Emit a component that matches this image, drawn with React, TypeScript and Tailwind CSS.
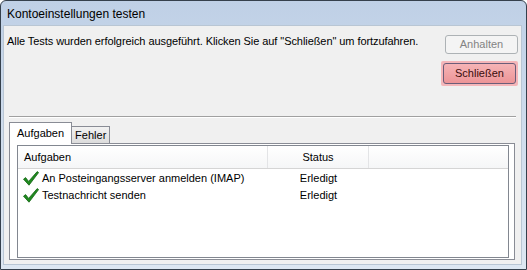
import React from 'react';

// Vista-style "Kontoeinstellungen testen" dialog.

type Task = { label: string; status: string };

const tasks: Task[] = [
  { label: 'An Posteingangsserver anmelden (IMAP)', status: 'Erledigt' },
  { label: 'Testnachricht senden', status: 'Erledigt' },
];

function Check() {
  return (
    <svg width="16" height="15" viewBox="0 0 16 15" className="shrink-0">
      <path
        d="M0.5 8.2 L2.6 6.6 L5.6 10.4 L14.2 0.6 L15.6 1.6 L6 14.2 Z"
        fill="#1f8a1f"
        stroke="#136313"
        strokeWidth="0.8"
        strokeLinejoin="round"
      />
    </svg>
  );
}

export default function App() {
  return (
    <div
      className="relative h-[270px] w-[527px] overflow-hidden bg-white text-black"
      style={{ fontFamily: '"Liberation Sans", Arial, sans-serif' }}
    >
      <div className="flex h-full flex-col rounded-t-[6px] border border-[#35404c] bg-gradient-to-b from-[#bfd0e6] via-[#d0dded] to-[#dde7f2]">
        {/* title bar */}
        <div className="flex h-[24px] shrink-0 items-center pl-[6px] pt-px text-[12px] text-black">
          Kontoeinstellungen testen
        </div>

        {/* client area */}
        <div className="mb-[4px] ml-[2px] mr-[4px] flex flex-1 flex-col border border-[#b9c6d4] bg-[#f0f0f0] text-[11px]">
          <div className="flex justify-between pl-[3px] pr-[3px]">
            <div className="pt-[7px] tracking-[-0.07px]">
              Alle Tests wurden erfolgreich ausgeführt. Klicken Sie auf &quot;Schließen&quot; um fortzufahren.
            </div>
            <div className="flex flex-col items-end gap-[7px] pt-[9px]">
              <div className="flex h-[19px] w-[73px] items-center justify-center rounded-[3px] border border-[#adb2b5] bg-[#f4f4f4] text-[#838383]">
                Anhalten
              </div>
              <div className="rounded-[2px] bg-[#f5b6b9] p-[2px]">
                <div className="flex h-[21px] w-[73px] items-center justify-center rounded-[3px] border border-[#6b5d79] bg-gradient-to-b from-[#f6b4b6] to-[#ec9497] text-[#3a0c0c]">
                  Schließen
                </div>
              </div>
            </div>
          </div>

          {/* etched separator */}
          <div className="ml-[5px] mr-[5px] mt-[30px] h-[2px] border-t border-b border-t-[#a0a0a0] border-b-white" />

          {/* tabs */}
          <div className="ml-[5px] mt-[4px] flex items-end">
            <div className="relative z-10 -mb-px flex h-[22px] items-center border border-b-0 border-[#898c95] bg-white px-[7px]">
              Aufgaben
            </div>
            <div className="flex h-[17px] items-center border border-b-0 border-l-0 border-[#898c95] bg-gradient-to-b from-[#f2f2f2] to-[#dcdcdc] px-[3px]">
              Fehler
            </div>
          </div>

          {/* tab panel */}
          <div className="mb-[4px] ml-[5px] mr-[6px] flex flex-1 flex-col border border-[#898c95] bg-white pb-px pl-[7px] pr-[5px] pt-px">
            <div className="flex flex-1 flex-col border border-[#828790] bg-white">
              <div className="flex h-[23px] shrink-0 border-b border-[#d5d5d5] bg-gradient-to-b from-white to-[#f5f6f7]">
                <div className="flex w-[250px] items-center border-r border-[#e3e4e6] pl-[6px]">Aufgaben</div>
                <div className="flex w-[101px] items-center justify-center border-r border-[#e3e4e6]">Status</div>
                <div className="flex-1" />
              </div>
              <div className="pt-px">
                {tasks.map((t) => (
                  <div key={t.label} className="flex h-[17px] items-center">
                    <div className="flex w-[250px] items-center gap-[3px] pl-[5px]">
                      <Check />
                      <span>{t.label}</span>
                    </div>
                    <div className="w-[101px] text-center">{t.status}</div>
                  </div>
                ))}
              </div>
            </div>
          </div>
        </div>
      </div>
    </div>
  );
}
